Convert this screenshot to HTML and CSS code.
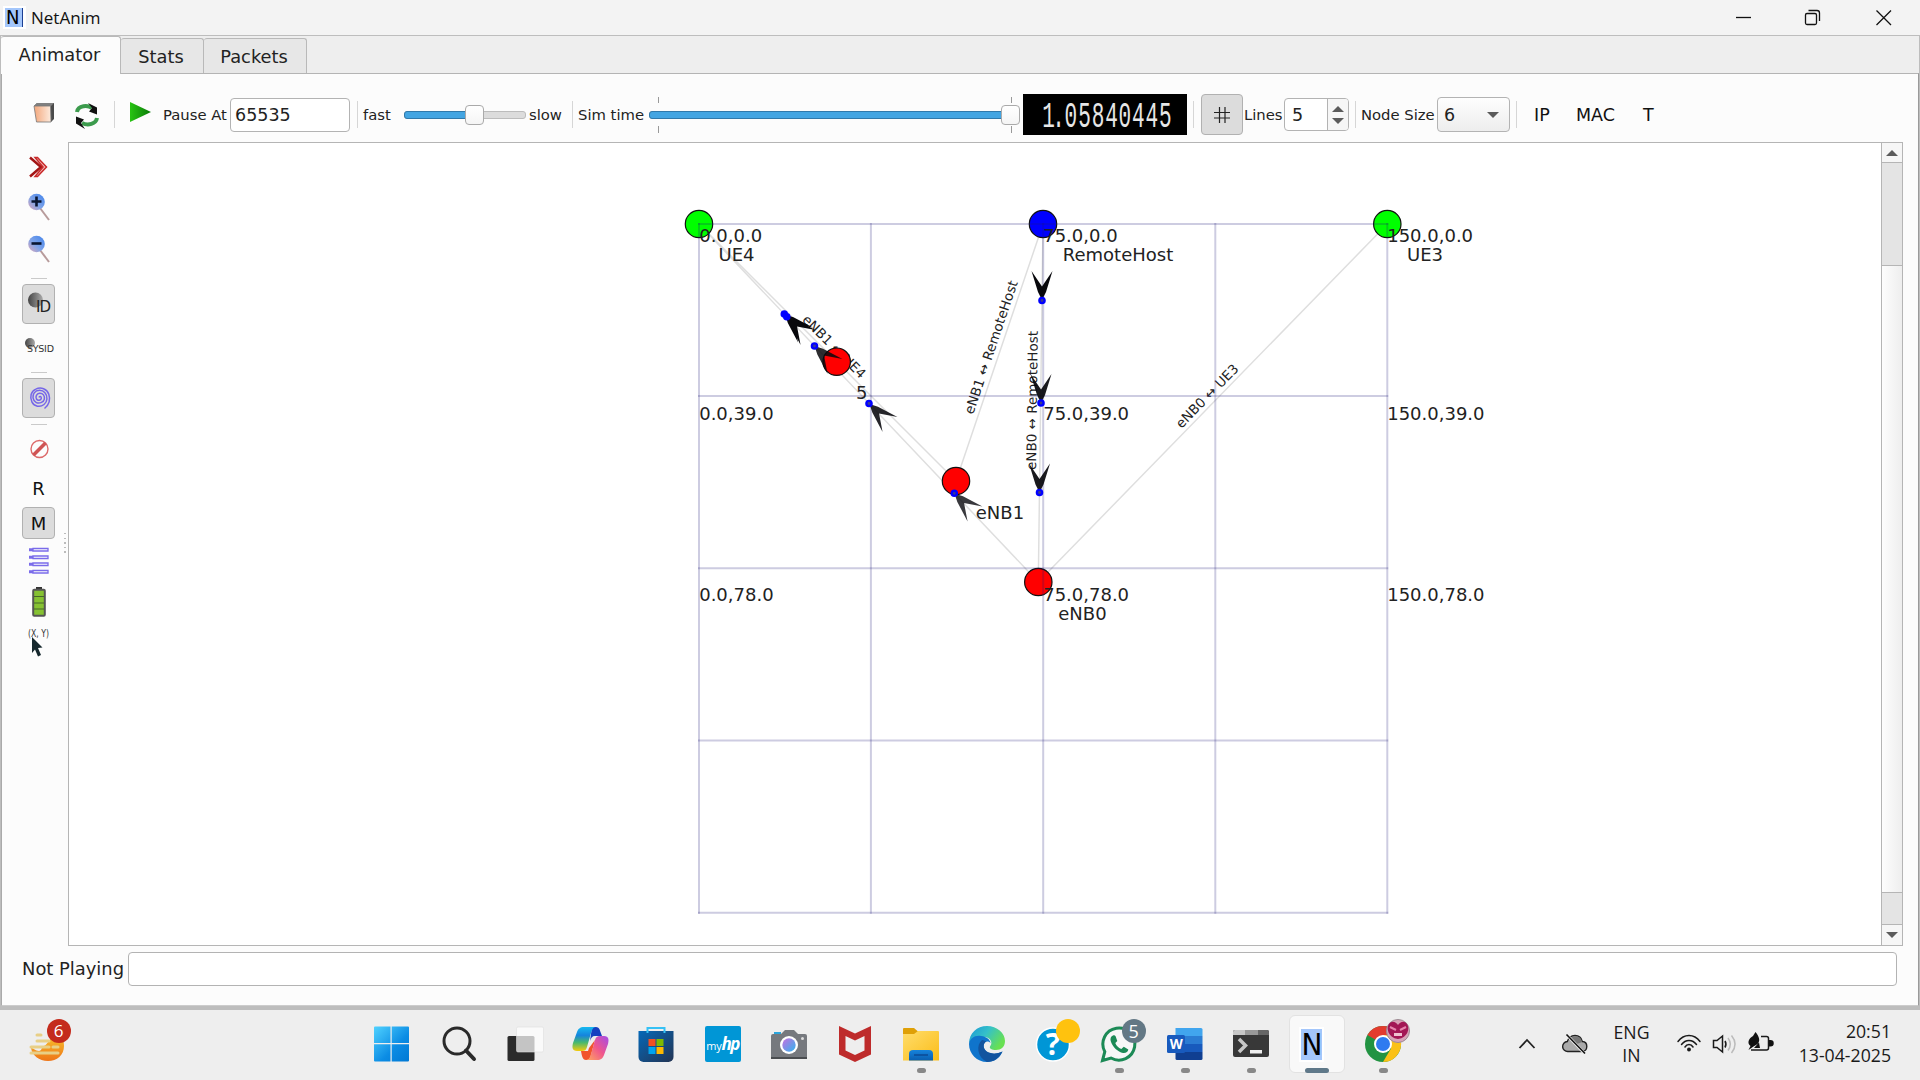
FILE: index.html
```html
<!DOCTYPE html>
<html lang="en">
<head>
<meta charset="utf-8">
<title>NetAnim</title>
<link rel="stylesheet" href="styles.css">
</head>
<body>
<header class="titlebar">
  <span class="app-icon">N</span>
  <span class="app-title">NetAnim</span>
  <svg class="win-controls" width="180" height="34" viewBox="1734 0 180 34" fill="none" stroke="#111" stroke-width="1.3">
    <path d="M1736 16.500h15"/>
    <rect x="1805.500" y="12.500" width="11" height="11" rx="1.500"/><path d="M1808.500 9.500h8.500a2.500 2.500 0 0 1 2.500 2.500v8"/>
    <path d="M1876.500 9.500l14.500 14.500M1891 9.500l-14.500 14.500"/>
  </svg>
</header>

<main class="window">
  <nav class="tabs">
    <div class="tab active">Animator</div>
    <div class="tab stats">Stats</div>
    <div class="tab packets">Packets</div>
  </nav>

  <section class="pane">
    <div class="toolbar">
      <svg class="ic-open" width="24" height="24" viewBox="0 0 24 24">
        <defs><linearGradient id="page" x1="0" x2="1"><stop offset="0" stop-color="#f3a77c"/><stop offset="1" stop-color="#fdebdd"/></linearGradient>
        <linearGradient id="play" x1="0" x2="1"><stop offset="0" stop-color="#28c413"/><stop offset="1" stop-color="#0b7a08"/></linearGradient></defs>
        <path d="M2 5L5 2h17v16l-3 3z" fill="#4a4a4a"/><path d="M5 2h17l-3 3H2z" fill="#808080"/><path d="M2 5h16.500l.5 16H4.500z" fill="url(#page)" stroke="#777" stroke-width=".8"/>
      </svg>
      <svg class="ic-reload" width="26" height="28" viewBox="0 0 26 28" fill="none">
        <path d="M3 11C4 4 14 4 18 7M23 17c-1 6-9 8-15 5" stroke="#3c9b4d" stroke-width="4"/>
        <path d="M14 2l9 4.500v7l-8-3 3-3.500zM11 28L2 22.500v-7l8 3-3 3.500z" fill="#111"/>
      </svg>
      <i class="sep s1"></i>
      <svg class="ic-play" width="21" height="20" viewBox="0 0 21 20"><path d="M0 0L21 10 0 20z" fill="url(#play)"/></svg>
      <span class="label l-pause">Pause At</span>
      <div class="field pause-field">65535</div>
      <i class="sep s2"></i>
      <span class="label l-fast">fast</span>
      <div class="slider speed"><div class="groove"><div class="fill"></div></div><div class="knob"></div></div>
      <span class="label l-slow">slow</span>
      <i class="sep s3"></i>
      <span class="label l-sim">Sim time</span>
      <div class="slider sim"><i class="tick a"></i><i class="tick b"></i><div class="groove"><div class="fill"></div></div><div class="knob"></div></div>
      <svg class="lcd" width="164" height="41" viewBox="0 0 164 41">
        <text transform="translate(0 33) scale(.62 1.08)" x="31 47 67 89 111 132.500 154 176 197.500 219.500" y="0">1.05840445</text>
      </svg>
      <i class="sep s4"></i>
      <div class="toggle grid-btn"><svg width="18" height="18" viewBox="0 0 18 18" stroke="#222" stroke-width="1.2"><path d="M6.500 1v16M12 1v16M1 6.500h16M1 12h16"/></svg></div>
      <span class="label l-lines">Lines</span>
      <div class="spin"><span>5</span><div class="arrows"><i class="up"></i><i class="down"></i></div></div>
      <i class="sep s5"></i>
      <span class="label l-node">Node Size</span>
      <div class="combo"><span>6</span><i class="down"></i></div>
      <i class="sep s6"></i>
      <span class="txt t-ip">IP</span>
      <span class="txt t-mac">MAC</span>
      <span class="txt t-t">T</span>
    </div>

    <div class="work">
      <aside class="side">
        <svg class="i-chev" width="20" height="22" viewBox="0 0 20 22" fill="none"><path d="M1 1.500L12 11 1 20.500" stroke="#a31515" stroke-width="2.500"/><path d="M6 1.500h2.500L17.500 11l-9 9.500H6L14 11z" stroke="#c92a2a" stroke-width="1.500" fill="#f3b7b7"/></svg>
        <svg class="i-zin" width="24" height="28" viewBox="0 0 24 28"><defs><linearGradient id="lens" x1="0" y1="1" x2="1" y2="0"><stop offset="0" stop-color="#e0a9b8"/><stop offset=".45" stop-color="#7ea3e8"/><stop offset="1" stop-color="#3f82ec"/></linearGradient></defs><path d="M13 15l9 12" stroke="#b79b9b" stroke-width="2"/><circle cx="9.500" cy="9" r="8.300" fill="url(#lens)"/><path d="M4.500 8.500h10M9.500 3.500v10" stroke="#0a1630" stroke-width="2.600"/></svg>
        <svg class="i-zout" width="24" height="28" viewBox="0 0 24 28"><path d="M13 15l9 12" stroke="#b79b9b" stroke-width="2"/><circle cx="9.500" cy="9" r="8.300" fill="url(#lens)"/><path d="M4.500 8.500h10" stroke="#0a1630" stroke-width="2.600"/></svg>
        <i class="hsep h1"></i>
        <div class="toggle id-btn"><svg width="24" height="24" viewBox="0 0 24 24"><defs><linearGradient id="ball"><stop offset="0" stop-color="#444"/><stop offset="1" stop-color="#aaa"/></linearGradient></defs><circle cx="8.500" cy="8" r="7.500" fill="url(#ball)"/><text x="9" y="20" class="id-text" textLength="15">ID</text></svg></div>
        <svg class="i-sys" width="34" height="18" viewBox="0 0 34 18"><circle cx="8" cy="6" r="5" fill="url(#ball)"/><text x="5" y="15" class="sys-text" textLength="27">SYSID</text></svg>
        <i class="hsep h2"></i>
        <div class="toggle spiral-btn"><svg width="24" height="26" viewBox="-12 -12.500 24 26" fill="none" stroke="#7566e8" stroke-width="1.500"><path d="M0 0C.5-1.800 2.500-1 2.300.8 2 3-1.300 3.500-2.500 1.500-4-1-2.200-4 .5-4.300c3.500-.3 5.500 2.800 4.800 6C4.500 5 0 6.500-3 4.800-6.500 3-6.800-1.800-4.800-4.600-2.300-8 3.300-8 6-4.700c3 3.500 2.500 9-1 11.700-4 3.200-9.700 2-12-2.400-2.600-5-1-11 3.800-13C2-10.800 8-8.700 9.800-3.200c1.700 5.200.3 10.500-4.300 14.200"/></svg></div>
        <i class="hsep h3"></i>
        <svg class="i-no" width="20" height="22" viewBox="0 0 20 22" fill="none" stroke="#dc6a6a"><circle cx="10.500" cy="11" r="8.500" stroke-width="1.400"/><path d="M4.500 17L16.500 5" stroke="#cf5454" stroke-width="3.600"/></svg>
        <span class="letter">R</span>
        <div class="toggle m-btn">M</div>
        <svg class="i-rows" width="20" height="28" viewBox="0 0 20 28" fill="none" stroke="#7a6bea" stroke-width="1.300"><path d="M4 1.500h15v2.500H4zM4 9h15v2.500H4zM4 16h15v2.500H4zM4 23.500h15V26H4z"/><path stroke-width="3" d="M0 2.700h4M0 10.200h4M0 17.200h4M0 24.700h4"/></svg>
        <svg class="i-bat" width="14" height="30" viewBox="0 0 14 30"><path d="M4 0h6v3H4z" fill="#333"/><rect x="1.200" y="2.700" width="11.600" height="26" rx="1" fill="#86c232" stroke="#555" stroke-width="2"/><path d="M2 9.500h10M2 16h10M2 22h10" stroke="#47672a" stroke-width="1.200"/></svg>
        <svg class="i-xy" width="24" height="32" viewBox="0 0 24 32"><text x="1" y="10" class="xy-text" textLength="21" lengthAdjust="spacingAndGlyphs">(X, Y)</text><path d="M5 10l10.500 10.500-4.500 .5 3 7-3 1.500-3-7-3 3.500z" fill="#15272c"/></svg>
      </aside>

      <div class="handle"></div>

      <div class="view">
        <svg class="scene" width="1812" height="802" viewBox="69 143 1812 802">
          <g stroke="#000" stroke-opacity=".13" stroke-width="1.500">
            <path d="M699 224L956 481M699 224L1038.300 582M1043 224L956 481M1043 224L1038.300 582M1387.300 224L1038.300 582"/>
          </g>
          <g class="link">
            <text transform="translate(801.500 320.500) rotate(45)" textLength="83">eNB1 ↔ UE4</text>
            <text transform="translate(973 415) rotate(-71.300)" textLength="140">eNB1 ↔ RemoteHost</text>
            <text transform="translate(1036 470) rotate(-89.300)" textLength="139">eNB0 ↔ RemoteHost</text>
            <text transform="translate(1181.500 429) rotate(-45.700)" textLength="83">eNB0 ↔ UE3</text>
          </g>
          <g stroke="#111" stroke-width="1.200">
            <circle cx="699" cy="224" r="13.700" fill="#0f0"/><circle cx="1387.300" cy="224" r="13.700" fill="#0f0"/>
            <circle cx="1043" cy="224" r="13.700" fill="#00f"/>
            <circle cx="836.700" cy="361.700" r="13.700" fill="#f00"/><circle cx="956" cy="481" r="13.700" fill="#f00"/><circle cx="1038.300" cy="582" r="13.700" fill="#f00"/>
          </g>
          <g stroke="#1c1878" stroke-opacity=".22" stroke-width="2">
            <path d="M698 224H1388.300M698 396H1388.300M698 568.300H1388.300M698 740.500H1388.300M698 912.700H1388.300"/>
            <path d="M699 223V913.700M870.900 223V913.700M1043.200 223V913.700M1215.300 223V913.700M1387.300 223V913.700"/>
          </g>
          <defs><path id="arrow" d="M0 0L-4 -8 -10.500 -29 0 -13.500 10.500 -29 4 -8z"/></defs>
          <g fill="#08080c">
            <use href="#arrow" transform="translate(1042 300)"/>
            <use href="#arrow" transform="translate(1041 403)" opacity=".93"/>
            <use href="#arrow" transform="translate(1039.500 492.500)" opacity=".93"/>
            <use href="#arrow" transform="translate(785 314.500) rotate(135)"/>
            <use href="#arrow" transform="translate(787.500 317) rotate(135)"/>
            <use href="#arrow" transform="translate(814.500 346) rotate(135)" opacity=".85"/>
            <use href="#arrow" transform="translate(869.500 404) rotate(135)" opacity=".88"/>
            <use href="#arrow" transform="translate(954.500 493.500) rotate(135)" opacity=".8"/>
          </g>
          <g fill="#3a3a90" stroke="#00f" stroke-width="2.400">
            <circle cx="1042" cy="300.500" r="2.600"/><circle cx="1041" cy="403" r="2.600"/><circle cx="1039.500" cy="492.500" r="2.600"/>
            <circle cx="784.300" cy="314" r="2.600" fill="#00f"/><circle cx="786.800" cy="316.800" r="2.600" fill="#00f"/>
            <circle cx="814.500" cy="346" r="2.600"/><circle cx="869" cy="403.500" r="2.600"/><circle cx="954.300" cy="493.300" r="2.600"/>
          </g>
          <g class="names">
            <text x="699.200" y="241.700">0.0,0.0</text><text x="1043.200" y="241.700">75.0,0.0</text><text x="1387.200" y="241.700">150.0,0.0</text>
            <text x="699.200" y="420.200">0.0,39.0</text><text x="1043.200" y="420.200">75.0,39.0</text><text x="1387.200" y="420.200">150.0,39.0</text>
            <text x="699.200" y="600.500">0.0,78.0</text><text x="1043.200" y="600.500">75.0,78.0</text><text x="1387.200" y="600.500">150.0,78.0</text>
            <text x="718.500" y="261.200">UE4</text><text x="1062.800" y="261.200">RemoteHost</text><text x="1407" y="261.200">UE3</text>
            <text x="856" y="399">5</text><text x="975.800" y="519.300">eNB1</text><text x="1058.300" y="620">eNB0</text>
          </g>
        </svg>
        <div class="scroll"><div class="sbtn"><i class="up"></i></div><div class="thumb"></div><div class="sbtn end"><i class="down"></i></div></div>
      </div>
    </div>

    <div class="status"><span>Not Playing</span><div class="progress"></div></div>
  </section>
</main>

<footer class="taskbar">
  <div class="weather">
    <svg width="36" height="36" viewBox="0 0 36 36"><defs><linearGradient id="sun" x1="0" y1="0" x2="0" y2="1"><stop offset="0" stop-color="#f8bf2c"/><stop offset="1" stop-color="#ee7518"/></linearGradient></defs><path d="M2 22c3 0 4 3 8 3 3 0 2-4 5-5 5-2 5-10 13-10 6 2 7 5 7 10 0 9-7 15-16 15S3 29 2 22z" fill="url(#sun)"/><g stroke="#e8cf86" stroke-width="3" stroke-linecap="round"><path d="M8 9h4M8 15h12M2 21h18M24 21h5M2 27h27"/></g></svg>
    <span class="badge red">6</span>
  </div>

  <div class="apps">
    <div class="app"><svg width="36" height="36" viewBox="0 0 36 36"><defs><linearGradient id="win" x1="0" y1="0" x2="1" y2="1"><stop offset="0" stop-color="#50d2ff"/><stop offset=".6" stop-color="#0b8ce4"/><stop offset="1" stop-color="#0078d4"/></linearGradient></defs><path d="M0 1.500a1 1 0 0 1 1-1h15.500V17H0zM17.700.5H34a1 1 0 0 1 1 1V17H17.700zM0 18.300h16.500V35.500H1a1 1 0 0 1-1-1zM17.700 18.300H35v16.200a1 1 0 0 1-1 1H17.700z" fill="url(#win)"/></svg></div>
    <div class="app nudge"><svg width="34" height="36" viewBox="0 0 34 36" fill="none" stroke="#2a2a2a"><circle cx="15" cy="15" r="13" stroke-width="3"/><path d="M24 24.500l8 8.500" stroke-width="4" stroke-linecap="round"/></svg></div>
    <div class="app nudge"><svg width="36" height="36" viewBox="-.5 0 36 36"><rect y="10" width="27" height="25" rx="1.500" fill="#2b2b2b"/><rect x="9" y="1" width="27" height="25" rx="1.500" fill="#fff" fill-opacity=".72" stroke="#ddd" stroke-width=".6"/></svg></div>
    <div class="app nudge"><svg width="38" height="36" viewBox="0 0 38 36"><defs><linearGradient id="ca" x1="0" y1="0" x2="0" y2="1"><stop offset="0" stop-color="#16b9f0"/><stop offset=".35" stop-color="#1584dd"/><stop offset=".65" stop-color="#49b96e"/><stop offset="1" stop-color="#f5cb0c"/></linearGradient><linearGradient id="cb" x1="1" y1="0" x2="0" y2="1"><stop offset="0" stop-color="#a44ce8"/><stop offset=".5" stop-color="#f0568c"/><stop offset="1" stop-color="#ffab5c"/></linearGradient></defs><path d="M20 1h4c3 0 4 3 4.500 5l1.500 4h-7c-3 0-4 2-5 5z" fill="#173fc0"/><path d="M9 25h7l1-3 6-8-4 15c-1 4-2 5-5 5s-4-3-5-9z" fill="#f2542c"/><path d="M12 1h12c-3 0-4 3-5 6l-4 14c-1 3-2 4-5 4H5c-5 0-5-4-4-8L5 6c1-3 3-5 7-5z" fill="url(#ca)"/><path d="M25 34H14c3 0 4-3 5-6l4-14c1-3 2-4 5-4h4c5 0 5 4 4 8l-4 11c-1 3-3 5-7 5z" fill="url(#cb)"/></svg></div>
    <div class="app"><svg width="36" height="36" viewBox="0 0 36 36"><defs><linearGradient id="st" x1="0" y1="0" x2="1" y2="1"><stop offset="0" stop-color="#0568b8"/><stop offset="1" stop-color="#233453"/></linearGradient></defs><path d="M.5 5h35v26a5 5 0 0 1-5 5h-25a5 5 0 0 1-5-5z" fill="url(#st)"/><path d="M9.500 7V2h17v5" fill="none" stroke="#35c1f5" stroke-width="2"/><path d="M10.500 13h7v7h-7z" fill="#f25022"/><path d="M18.500 13h7v7h-7z" fill="#7fba00"/><path d="M10.500 21h7v7h-7z" fill="#00a4ef"/><path d="M18.500 21h7v7h-7z" fill="#ffb900"/></svg></div>
    <div class="app"><div class="myhp">my<b>hp</b></div></div>
    <div class="app"><svg width="36" height="36" viewBox="0 0 36 36"><defs><linearGradient id="lens2" x1="0" y1="0" x2="1" y2="1"><stop offset="0" stop-color="#c86fe0"/><stop offset="1" stop-color="#2fb5ef"/></linearGradient></defs><path d="M3 9V6h7v3z" fill="#2aa5dc"/><path d="M2 8h8l4-4h9l4 4h7a2 2 0 0 1 2 2v21H0V10a2 2 0 0 1 2-2z" fill="#76797e"/><path d="M0 31h36v2H0z" fill="#4a4d50"/><circle cx="18" cy="19" r="9" fill="#fff"/><circle cx="18" cy="19" r="6.700" fill="url(#lens2)"/><circle cx="31.500" cy="12.500" r="1.500" fill="#ddd"/></svg></div>
    <div class="app"><svg width="32" height="36" viewBox="0 0 32 36"><path fill-rule="evenodd" d="M0 0l16 7.500L32 0v28.500L16 36 0 28.500zM6.500 10v14.500L16 29l9.500-4.500V10L16 14.500z" fill="#be2b2b"/></svg></div>
    <div class="app run"><svg width="36" height="36" viewBox="0 0 36 36"><defs><linearGradient id="fo" x1="0" y1="0" x2="1" y2="1"><stop offset="0" stop-color="#ffdd6c"/><stop offset="1" stop-color="#fbbd18"/></linearGradient><linearGradient id="fb" x1="0" y1="0" x2="0" y2="1"><stop offset="0" stop-color="#1683dc"/><stop offset="1" stop-color="#0a5fb0"/></linearGradient></defs><path d="M0 3a1 1 0 0 1 1-1h10l4 3.500V10H0z" fill="#dfa007"/><path d="M0 8h11l4-3h20a1 1 0 0 1 1 1v28.500H0z" fill="url(#fo)"/><path d="M6 34.500V28a4 4 0 0 1 4-4h16a4 4 0 0 1 4 4v6.500z" fill="url(#fb)"/><path d="M11 29h14" stroke="#0b4a94" stroke-width="1.500"/></svg></div>
    <div class="app"><svg width="36" height="36" viewBox="0 0 36 36"><defs><linearGradient id="eg" x1="0" y1="0" x2="1" y2=".5"><stop offset="0" stop-color="#1795d6"/><stop offset=".5" stop-color="#35c1c9"/><stop offset="1" stop-color="#68e052"/></linearGradient></defs><path d="M0 18C0 7 8 0 18 0s18 7 18 15c0 6-4 9-9 9-4 0-7-1.500-6-3.500 4-5-1-10-7-9.500S2 13 0 18z" fill="url(#eg)"/><path d="M0 18c1-6 6-9 12-8 6 .5 9 4 9.500 7-4-4-8 .5-6.500 5 2 6 11 8 18.500 3.500C31 32 25 36 18 36 8 36 0 28 0 18z" fill="#0f74cc"/><path d="M13 14c-6 5-5 17 5 22 7 0 12-4 15.500-10.500C26 29 17 27.500 15 22c-.8-3 0-5 2-6.500-1.300-1-3-1.500-4-1.500z" fill="#12549f"/></svg></div>
    <div class="app"><svg width="36" height="36" viewBox="0 0 36 36"><circle cx="18" cy="18.500" r="16.500" fill="#0096d6" stroke="#fff" stroke-width="1.500"/></svg><span class="q">?</span><span class="badge yellow"></span></div>
    <div class="app run"><svg width="36" height="36" viewBox="0 0 36 36"><path d="M1.500 34.500l2.300-8.800A16 16 0 1 1 10 32z" fill="#fff" fill-opacity=".5" stroke="#1c8a56" stroke-width="3"/><path d="M12 9.500c-2 .5-3 3-2.300 5.500C11.500 21 17 26 22 27c3 .3 5-1 5.300-3.500l-4.500-2.700-2.500 2.200c-3-1.200-5-3.300-6-6l2-2-1.700-4.800c-.5-1-1.700-1-2.600-.7z" fill="#1c8a56"/></svg><span class="badge slate">5</span></div>
    <div class="app run"><div class="word"><svg width="36" height="36" viewBox="0 0 36 36"><path d="M8.500 2H34a1.500 1.500 0 0 1 1.500 1.500V10h-27z" fill="#41a5ee"/><path d="M8.500 10h27v8h-27z" fill="#2b7cd3"/><path d="M8.500 18h27v8h-27z" fill="#185abd"/><path d="M8.500 26h27v6.500A1.500 1.500 0 0 1 34 34H10a1.500 1.500 0 0 1-1.500-1.500z" fill="#103f91"/><rect y="9" width="18" height="18" rx="1.500" fill="#185abd"/></svg><span>W</span></div></div>
    <div class="app run"><svg width="36" height="36" viewBox="0 0 36 36"><rect y="4" width="36" height="27" rx="2" fill="#383838"/><path d="M2 4h10v5H0V6a2 2 0 0 1 2-2z" fill="#c8c8c8"/><path d="M12 4h13v5H12z" fill="#999"/><path d="M25 4h9a2 2 0 0 1 2 2v3H25z" fill="#666"/><path d="M6 13l6.500 6.500L6 26" fill="none" stroke="#c8c8c8" stroke-width="3.500"/><path d="M17 24h12v3.500H17z" fill="#eee"/></svg></div>
    <div class="app focus"><div class="tile"><span class="big-n">N</span></div></div>
    <div class="app run"><svg width="36" height="36" viewBox="0 0 36 36"><circle cx="18" cy="18" r="18" fill="#229342"/><path d="M18 18L2.400 9A18 18 0 0 1 33.600 9z" fill="#e33b2e"/><path d="M18 9h15.600A18 18 0 0 1 18 36l8-13.500z" fill="#fbc116"/><circle cx="18" cy="18" r="9" fill="#fff"/><circle cx="18" cy="18" r="7" fill="#2f7bf0"/></svg>
      <svg class="avatar" width="24" height="24" viewBox="0 0 24 24"><circle cx="12" cy="12" r="11.500" fill="#d9a3b8" stroke="#9b8b92"/><path d="M12 20C2 19 0 9 3 5s7-2 9 1c2-3 6-5 9-1s1 14-9 15z" fill="#a31655"/><path d="M4 8l6 3M20 8l-6 3" stroke="#e884ad" stroke-width="2"/><path d="M8 14h8v3H8z" fill="#eec0d0"/></svg></div>
  </div>

  <div class="tray">
    <svg class="t-chev" width="18" height="12" viewBox="0 0 18 12" fill="none" stroke="#222" stroke-width="1.800"><path d="M1.500 10L9 2l7.500 8"/></svg>
    <svg class="t-cloud" width="26" height="22" viewBox="0 0 26 22"><path d="M6 18.500a5 5 0 0 1-.7-10C6.500 4.500 9.500 2.500 13 2.500c4 0 6.500 2.500 7.300 6 3 .2 4.500 2.500 4.500 5s-1.800 5-4.800 5z" fill="#aaa" stroke="#222" stroke-width="1.400"/><path d="M8 6c4-4 11-3 12 3l-5 2z" fill="#777"/><path d="M4.500 1.500l18 19" stroke="#eee" stroke-width="3"/><path d="M4.500 1.500l18.500 19" stroke="#111" stroke-width="1.600"/></svg>
    <div class="lang">ENG<br>IN</div>
    <svg class="t-wifi" width="24" height="18" viewBox="0 0 24 18" fill="none" stroke="#1a1a1a" stroke-width="1.500" stroke-linecap="round"><path d="M1 7.500c6-8 16-8 22 0M4.500 10.500c4-5.500 11-5.500 15 0M8 13c2-3.200 6-3.200 8 0"/><circle cx="12" cy="15.500" r="1.200" fill="#111"/></svg>
    <svg class="t-vol" width="26" height="22" viewBox="0 0 26 22" fill="none" stroke="#1a1a1a" stroke-width="1.500"><path d="M1.500 7.500v7H5l5.500 4.500V3L5 7.500zM13 8c1.200 2 1.200 4.500 0 6.500"/><path d="M16 5c3 4 3 8.500 0 12.500M19.500 2.500c4.500 5.500 4.500 12 0 17.500" stroke="#bbb"/></svg>
    <svg class="t-bat" width="26" height="22" viewBox="0 0 26 22"><path d="M14 4.500h5.500a2 2 0 0 1 2 2v9.500a2 2 0 0 1-2 2H4" fill="none" stroke="#1a1a1a" stroke-width="1.500"/><path d="M22 8h1.500a2 2 0 0 1 0 6.500H22zM8.500 0c4 5 5 9 2 12l-4 2.500-5 3.500 2-4C-.5 11 2 6 6 4zM7 16l5-5.500 1 5.500z" fill="#111"/></svg>
    <div class="clock">20:51<br>13-04-2025</div>
  </div>
</footer>
</body>
</html>
```
FILE: styles.css
```css
* { box-sizing: border-box; }
body { margin: 0; width: 1920px; height: 1080px; overflow: hidden; display: flex; flex-direction: column; background: #eee; font-family: "DejaVu Sans", sans-serif; font-size: 18px; color: #222; }
svg { display: block; flex: none; overflow: visible; }
i { display: block; flex: none; }

.titlebar { height: 35px; flex: none; display: flex; align-items: center; background: #f3f3f3; font-family: "Open Sans", sans-serif; }
.app-icon { margin-left: 3px; width: 23px; height: 23px; border: 2px solid #fff; background: linear-gradient(90deg, #a3c6fb 17px, #1c3f93 17px, #1c3f93 18px, #fff 18px); color: #000; font: 20px/18px "DejaVu Sans Condensed", "DejaVu Sans", sans-serif; padding-left: 1px; }
.app-title { margin-left: 5px; font-size: 17px; color: #111; }
.win-controls { margin-left: auto; margin-right: 6px; }

.window { height: 975px; flex: none; display: flex; flex-direction: column; background: #eee; border: solid #bdbdbd; border-width: 1px 1px 4px 1px; }
.tabs { height: 37px; flex: none; display: flex; align-items: flex-end; }
.tab { height: 35px; border: 1px solid #b9b9b9; border-bottom: 0; border-left: 0; border-radius: 3px 3px 0 0; background: #e7e7e7; display: flex; align-items: center; justify-content: center; padding: 0 2px 0 0; font-size: 17.800px; }
.tab.active { width: 120px; height: 38px; margin-bottom: -1px; padding: 0 2px 2px 0; background: #fcfcfc; position: relative; }
.tab.stats { width: 83px; }
.tab.packets { width: 103px; }
.pane { flex: 1; min-height: 0; background: #fcfcfc; border: 1px solid #b4b4b4; border-color: #b4b4b4 #9a9a9a #ccc #aaa; display: flex; flex-direction: column; }

.toolbar { height: 68px; flex: none; display: flex; align-items: center; padding-top: 13px; }
.toolbar > * { flex: none; }
.label { font-size: 14.800px; white-space: nowrap; }
.sep { width: 1px; height: 27px; background: #d6d6d6; }
.ic-open { margin: -4px 0 0 30px; }
.ic-reload { margin: 1px 0 0 18px; }
.s1 { margin-left: 14px; }
.ic-play { margin: -6px 0 0 15px; }
.l-pause { width: 67px; margin-left: 12px; }
.field { border: 1.500px solid #b3b3b3; border-radius: 4px; background: #fff; }
.pause-field { width: 120px; height: 34px; line-height: 32px; padding-left: 4px; font-size: 17.500px; }
.s2 { margin-left: 7px; }
.l-fast { margin-left: 5px; width: 41px; }
.slider { position: relative; display: flex; align-items: center; height: 36px; }
.groove { flex: 1; height: 8px; border-radius: 3px; border: 1px solid #bcbcbc; background: #dcdcdc; }
.fill { height: 8px; margin: -1px; border-radius: 3px; border: 1px solid #3079ab; background: #43a5e2; }
.knob { position: absolute; width: 19px; height: 20px; border: 1px solid #aaa; border-radius: 4px; background: linear-gradient(#fff, #f5f5f5); }
.speed { width: 122px; }
.speed .fill { width: 66px; }
.speed .knob { left: 61px; }
.l-slow { margin-left: 3px; width: 41px; }
.s3 { margin-left: 2px; }
.l-sim { margin-left: 5px; width: 71px; }
.sim { width: 371px; }
.sim .knob { right: 0; }
.tick { position: absolute; width: 1px; height: 36px; background: linear-gradient(#999 6px, transparent 6px, transparent 29px, #999 29px); }
.tick.a { left: 9px; } .tick.b { right: 8px; }
.lcd { margin-left: 3px; background: #000; }
.lcd text { font: 34px "Liberation Mono", monospace; fill: #e6e6e6; }
.s4 { margin-left: 6px; }
.toggle { border: 1.500px solid #b1b1b1; border-radius: 4px; background: #dcdcdc; display: flex; align-items: center; justify-content: center; }
.grid-btn { width: 42px; height: 41px; margin-left: 7px; }
.l-lines { margin-left: 1px; width: 40px; }
.spin { width: 65px; height: 33px; border: 1.500px solid #b3b3b3; border-radius: 4px; background: #fff; display: flex; align-items: center; padding-left: 7px; font-size: 17.500px; overflow: hidden; }
.arrows { margin-left: auto; width: 21px; height: 100%; border-left: 1px solid #b3b3b3; background: #f6f6f6; display: flex; flex-direction: column; align-items: center; justify-content: center; gap: 6px; }
.up, .down { width: 0; height: 0; border: 6px solid transparent; border-top-width: 0; border-bottom: 6px solid #5b5b5b; }
.down { border-bottom-width: 0; border-top: 6px solid #5b5b5b; }
.s5 { margin-left: 6px; }
.l-node { margin-left: 5px; width: 76px; }
.combo { width: 73px; height: 35px; border: 1.500px solid #b3b3b3; border-radius: 4px; background: linear-gradient(#fefefe, #ededed); display: flex; align-items: center; justify-content: space-between; padding: 0 10px 0 6px; font-size: 17.500px; }
.s6 { margin-left: 6px; }
.txt { font-size: 17.500px; color: #111; }
.t-ip { margin-left: 17px; width: 42px; }
.t-mac { width: 67px; }

.work { height: 804px; flex: none; display: flex; }
.side { width: 60px; flex: none; display: flex; flex-direction: column; align-items: center; padding-left: 13px; }
.i-chev { margin-top: 14px; }
.i-zin { margin-top: 15px; }
.i-zout { margin-top: 14px; }
.hsep { width: 16px; height: 1px; background: #cacaca; }
.h1 { margin-top: 15px; }
.toggle { flex: none; }
.id-btn { width: 33px; height: 40px; margin-top: 5px; }
.id-text { font-size: 15px; fill: #222; }
.i-sys { margin-top: 13px; }
.sys-text { font-size: 9.500px; fill: #333; }
.h2 { margin-top: 17px; }
.spiral-btn { width: 33px; height: 40px; margin-top: 5px; }
.h3 { margin-top: 6px; }
.i-no { margin-top: 13px; }
.letter { margin-top: 18px; height: 22px; line-height: 22px; color: #111; }
.m-btn { width: 33px; height: 32px; margin-top: 7px; color: #111; }
.i-rows { margin-top: 8px; }
.i-bat { margin-top: 12px; }
.i-xy { margin-top: 10px; }
.xy-text { font-size: 11px; fill: #333; }
.handle { width: 6px; flex: none; height: 24px; margin-top: 389px; background: repeating-linear-gradient(transparent 0 2px, #bbb 2px 3.500px, transparent 3.500px 4.500px) 2px 0 / 2px 100% no-repeat; }
.view { width: 1835px; height: 804px; flex: none; border: 1px solid #b5b5b5; background: #fff; display: flex; }
.names text { font-size: 18px; fill: #222; }
.link text { font-size: 13.400px; fill: #222; }
.scroll { width: 21px; flex: none; border-left: 1px solid #b5b5b5; background: #e4e4e4; display: flex; flex-direction: column; }
.sbtn { height: 20px; background: #f6f6f6; border-bottom: 1px solid #b5b5b5; display: flex; align-items: center; justify-content: center; }
.sbtn.end { margin-top: auto; height: 21px; border-bottom: 0; border-top: 1px solid #b5b5b5; }
.thumb { margin-top: 102px; height: 628px; border: solid #b5b5b5; border-width: 1px 0; background: linear-gradient(90deg, #fdfdfd, #eee); }

.status { display: flex; align-items: center; padding-left: 20px; margin-top: 5px; height: 35px; }
.status span { width: 106px; white-space: nowrap; font-size: 17.900px; }
.progress { width: 1769px; height: 34px; border: 1.500px solid #b3b3b3; border-radius: 4px; background: #fff; }

.taskbar { height: 70px; flex: none; display: flex; background: #eee; position: relative; font-family: "Open Sans", sans-serif; }
.weather { width: 359px; flex: none; padding: 16px 0 0 29px; position: relative; }
.badge { position: absolute; width: 24px; height: 24px; border-radius: 50%; text-align: center; color: #fff; font: 17px/24px "Open Sans", sans-serif; }
.badge.red { left: 46.500px; top: 8.500px; background: #c42b1c; }
.badge.yellow { left: 36px; top: 9px; background: #ffc20e; }
.badge.slate { left: 35.500px; top: 9px; background: #637885; font-size: 18px; }
.apps { display: flex; }
.app { width: 66.100px; height: 70px; flex: none; position: relative; display: flex; align-items: center; justify-content: center; padding-bottom: 2px; }
.nudge { padding-left: 2px; }
.run::after { content: ""; position: absolute; left: 29px; top: 58px; width: 9px; height: 5px; border-radius: 3px; background: #888; }
.myhp { width: 36px; height: 36px; border-radius: 2px; background: #0096d6; color: #fff; font: 11px/35px "Open Sans", sans-serif; text-align: center; letter-spacing: -.3px; white-space: nowrap; }
.myhp b { font-size: 17px; font-style: italic; letter-spacing: -1.500px; }
.q { position: absolute; left: 0; width: 66px; top: 15px; text-align: center; color: #fff; font: bold 30px/38px "Open Sans", sans-serif; }
.word { position: relative; }
.word span { position: absolute; left: 0; top: 9px; width: 18px; text-align: center; color: #fff; font: bold 13.500px/18px "Open Sans", sans-serif; }
.tile { width: 56px; height: 58px; border-radius: 6px; border: 1px solid #e2e2e2; background: #f9f9f9; display: flex; align-items: center; padding-left: 9px; }
.big-n { width: 25px; height: 35px; border: 2.500px solid #fff; background: #a3c6fb; color: #000; font: 31px/30px "DejaVu Sans Condensed", "DejaVu Sans", sans-serif; display: flex; justify-content: center; }
.focus::after { content: ""; position: absolute; left: 21px; top: 58px; width: 24px; height: 5px; border-radius: 3px; background: #5f7889; }
.avatar { position: absolute; left: 36px; top: 9px; }
.tray { flex: 1; display: flex; align-items: flex-start; color: #1a1a1a; font-size: 17.700px; line-height: 24px; }
.tray > * { flex: none; }
.t-chev { margin: 28px 0 0 101px; }
.t-cloud { margin: 23px 0 0 26px; }
.lang { width: 60px; margin: 11px 0 0 14px; text-align: center; line-height: 23px; }
.t-wifi { margin: 24px 0 0 15px; }
.t-vol { margin: 23px 0 0 11px; }
.t-bat { margin: 22px 0 0 9px; }
.clock { margin: 9px 29px 0 auto; text-align: right; }
```
